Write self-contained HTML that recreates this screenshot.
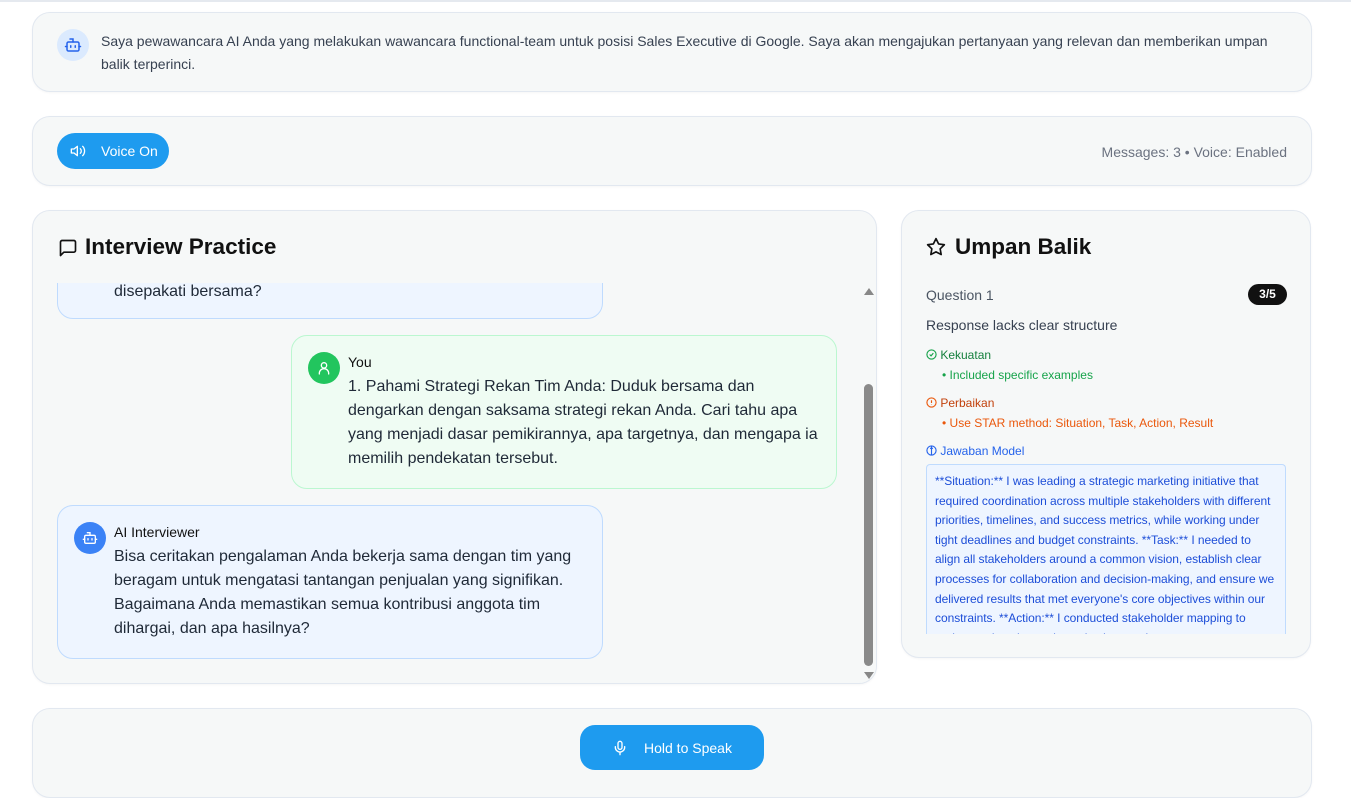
<!DOCTYPE html>
<html><head><meta charset="utf-8"><style>
*{box-sizing:border-box;margin:0;padding:0}
body{width:1351px;height:780px;overflow:hidden;background:#fff;font-family:"Liberation Sans",sans-serif;color:#1f2937;position:relative}
.card{position:absolute;background:#f6f8f8;border:1px solid #e2e8f0;border-radius:18px;box-shadow:0 1px 2px rgba(0,0,0,.04)}
.topline{position:absolute;left:0;top:0;width:1351px;height:2px;background:#e5e9ef}
.bubble{position:absolute;border-radius:16px;font-size:16px;line-height:24px;color:#1f2937}
.ai{background:#eef5ff;border:1px solid #bfdbfe}
.me{background:#effcf3;border:1px solid #bbf7d0}
.av{position:absolute;width:32px;height:32px;border-radius:50%;display:flex;align-items:center;justify-content:center}
.name{font-size:14px;line-height:18px;color:#111}
</style></head><body>
<div class="topline"></div>
<div class="card" style="left:32px;top:12px;width:1280px;height:80px">
 <div class="av" style="left:24px;top:16px;background:#dbeafe"><svg width="18" height="18" viewBox="0 0 24 24" fill="none" stroke="#2563eb" stroke-width="2" stroke-linecap="round"><path d="M12 8V4H8"/><rect x="4" y="8" width="16" height="12" rx="2"/><path d="M2 14h2M20 14h2M15 13v2M9 13v2"/></svg></div>
 <div style="position:absolute;left:68px;top:17px;width:1190px;font-size:14px;line-height:23px;color:#374151">Saya pewawancara AI Anda yang melakukan wawancara functional-team untuk posisi Sales Executive di Google. Saya akan mengajukan pertanyaan yang relevan dan memberikan umpan balik terperinci.</div>
</div>
<div class="card" style="left:32px;top:116px;width:1280px;height:70px">
 <div style="position:absolute;left:24px;top:16px;width:112px;height:36px;border-radius:18px;background:#1e9bef;color:#fff;font-size:14px;display:flex;align-items:center"><svg style="margin-left:13px" width="16" height="16" viewBox="0 0 24 24" fill="none" stroke="#fff" stroke-width="2" stroke-linecap="round" stroke-linejoin="round"><path d="M11 5L6 9H2v6h4l5 4V5z"/><path d="M15.5 8.5a5 5 0 0 1 0 7M19 5a10 10 0 0 1 0 14"/></svg><span style="margin-left:15px">Voice On</span></div>
 <div style="position:absolute;right:24px;top:27px;font-size:14px;color:#6b7280">Messages: 3 • Voice: Enabled</div>
</div>
<div class="card" style="left:32px;top:210px;width:845px;height:474px;overflow:hidden">
 <svg style="position:absolute;left:25px;top:27px" width="20" height="20" viewBox="0 0 24 24" fill="none" stroke="#111" stroke-width="2" stroke-linejoin="round"><path d="M21 15a2 2 0 0 1-2 2H7l-4 4V5a2 2 0 0 1 2-2h14a2 2 0 0 1 2 2z"/></svg>
 <div style="position:absolute;left:52px;top:23px;font-size:22.5px;font-weight:bold;color:#111">Interview Practice</div>
 <div style="position:absolute;left:0;top:72px;width:828px;height:402px;overflow:hidden">
  <div class="bubble ai" style="left:24px;top:-60px;width:546px;height:96px"><div style="position:absolute;left:56px;top:56px">disepakati bersama?</div></div>
  <div class="bubble me" style="left:258px;top:52px;width:546px;height:154px">
   <div class="av" style="left:16px;top:16px;background:#22c55e"><svg width="16" height="16" viewBox="0 0 24 24" fill="none" stroke="#fff" stroke-width="2" stroke-linecap="round"><circle cx="12" cy="8" r="4"/><path d="M5 21v-1a7 7 0 0 1 14 0v1"/></svg></div>
   <div class="name" style="position:absolute;left:56px;top:17px">You</div>
   <div style="position:absolute;left:56px;top:39px;width:470px">1. Pahami Strategi Rekan Tim Anda: Duduk bersama dan dengarkan dengan saksama strategi rekan Anda. Cari tahu apa yang menjadi dasar pemikirannya, apa targetnya, dan mengapa ia memilih pendekatan tersebut.</div>
  </div>
  <div class="bubble ai" style="left:24px;top:222px;width:546px;height:154px">
   <div class="av" style="left:16px;top:16px;background:#3b82f6"><svg width="16" height="16" viewBox="0 0 24 24" fill="none" stroke="#fff" stroke-width="2" stroke-linecap="round"><path d="M12 8V4H8"/><rect x="4" y="8" width="16" height="12" rx="2"/><path d="M2 14h2M20 14h2M15 13v2M9 13v2"/></svg></div>
   <div class="name" style="position:absolute;left:56px;top:17px">AI Interviewer</div>
   <div style="position:absolute;left:56px;top:39px;width:470px">Bisa ceritakan pengalaman Anda bekerja sama dengan tim yang beragam untuk mengatasi tantangan penjualan yang signifikan. Bagaimana Anda memastikan semua kontribusi anggota tim dihargai, dan apa hasilnya?</div>
  </div>
 </div>
 <div style="position:absolute;left:828px;top:72px;width:16px;height:402px;background:#f6f8f8">
  <div style="position:absolute;left:3px;top:5px;width:0;height:0;border-left:5px solid transparent;border-right:5px solid transparent;border-bottom:7px solid #888"></div>
  <div style="position:absolute;left:3px;top:101px;width:9px;height:282px;border-radius:5px;background:#8a8a8a"></div>
  <div style="position:absolute;left:3px;top:389px;width:0;height:0;border-left:5px solid transparent;border-right:5px solid transparent;border-top:7px solid #888"></div>
 </div>
</div>
<div class="card" style="left:901px;top:210px;width:410px;height:448px;overflow:hidden">
 <svg style="position:absolute;left:24px;top:26px" width="20" height="20" viewBox="0 0 24 24" fill="none" stroke="#111" stroke-width="2" stroke-linejoin="round"><path d="M12 2l3.1 6.3 6.9 1-5 4.9 1.2 6.8L12 17.8 5.8 21l1.2-6.8-5-4.9 6.9-1z"/></svg>
 <div style="position:absolute;left:53px;top:23px;font-size:22.5px;font-weight:bold;color:#111">Umpan Balik</div>
 <div style="position:absolute;left:24px;top:76px;font-size:14px;color:#4b5563">Question 1</div>
 <div style="position:absolute;left:346px;top:73px;width:39px;height:21px;border-radius:11px;background:#111;color:#fff;font-size:12px;font-weight:bold;text-align:center;line-height:21px">3/5</div>
 <div style="position:absolute;left:24px;top:106px;font-size:14px;color:#374151">Response lacks clear structure</div>
 <div style="position:absolute;left:24px;top:137px;font-size:12px;color:#15803d"><svg width="11" height="11" viewBox="0 0 24 24" fill="none" stroke="#16a34a" stroke-width="2.5" style="vertical-align:-1px"><circle cx="12" cy="12" r="10"/><path d="M8 12l3 3 5-6"/></svg> Kekuatan</div>
 <div style="position:absolute;left:40px;top:157px;font-size:12px;color:#16a34a">• Included specific examples</div>
 <div style="position:absolute;left:24px;top:185px;font-size:12px;color:#c2410c"><svg width="11" height="11" viewBox="0 0 24 24" fill="none" stroke="#ea580c" stroke-width="2.5" style="vertical-align:-1px"><circle cx="12" cy="12" r="10"/><path d="M12 7v6M12 16v1"/></svg> Perbaikan</div>
 <div style="position:absolute;left:40px;top:205px;font-size:12px;color:#ea580c">• Use STAR method: Situation, Task, Action, Result</div>
 <div style="position:absolute;left:24px;top:233px;font-size:12px;color:#2563eb"><svg width="11" height="11" viewBox="0 0 24 24" fill="none" stroke="#2563eb" stroke-width="2.5" style="vertical-align:-1px"><circle cx="12" cy="12" r="10"/><path d="M12 2v20M9 8l3-2 3 2"/></svg> Jawaban Model</div>
 <div style="position:absolute;left:24px;top:253px;width:360px;height:170px;background:#eef5ff;border:1px solid #bfdbfe;border-bottom:none;border-radius:4px 4px 0 0;overflow:hidden;padding:7px 6px 7px 8px;font-size:12px;line-height:19.6px;color:#1d4ed8;letter-spacing:-0.05px">**Situation:** I was leading a strategic marketing initiative that required coordination across multiple stakeholders with different priorities, timelines, and success metrics, while working under tight deadlines and budget constraints. **Task:** I needed to<br>align all stakeholders around a common vision, establish clear processes for collaboration and decision-making, and ensure we delivered results that met everyone's core objectives within our constraints. **Action:** I conducted stakeholder mapping to understand each party's motivations and concerns</div>
</div>
<div class="card" style="left:32px;top:708px;width:1280px;height:90px">
 <div style="position:absolute;left:547px;top:16px;width:184px;height:45px;border-radius:15px;background:#1e9bef;color:#fff;font-size:14px;display:flex;align-items:center"><svg style="margin-left:32px" width="16" height="16" viewBox="0 0 24 24" fill="none" stroke="#fff" stroke-width="2" stroke-linecap="round"><rect x="9" y="2" width="6" height="12" rx="3"/><path d="M5 10v1a7 7 0 0 0 14 0v-1M12 18v4"/></svg><span style="margin-left:16px">Hold to Speak</span></div>
</div>
</body></html>
